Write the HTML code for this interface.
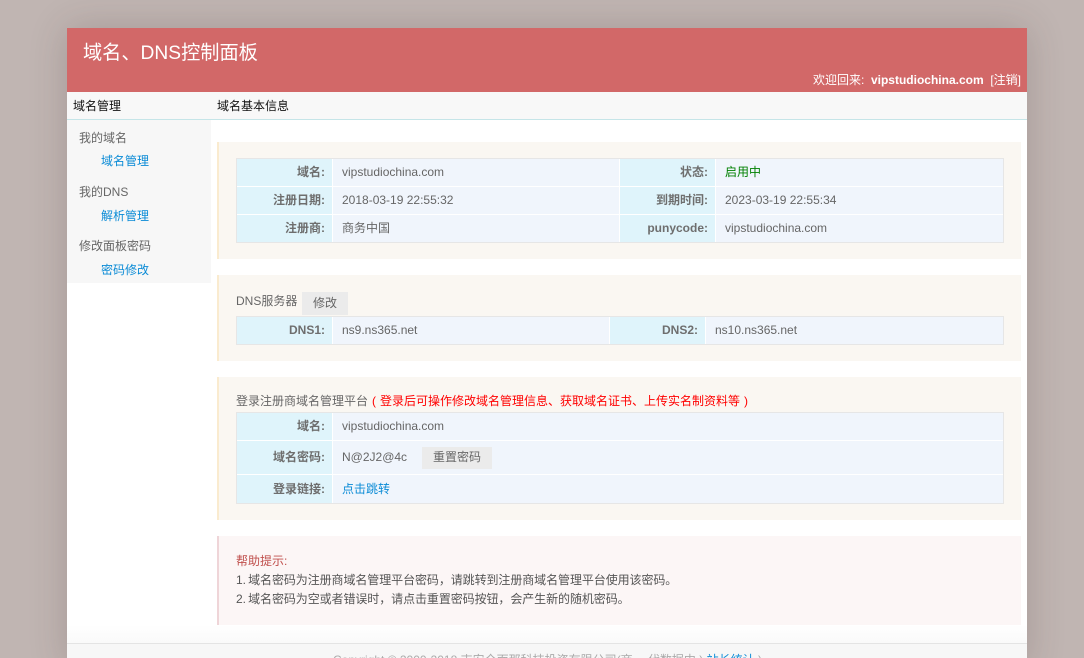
<!DOCTYPE html>
<html lang="zh-CN"><head><meta charset="utf-8"><title>域名、DNS控制面板</title>
<style>
html,body{margin:0;padding:0;width:1084px;height:658px;overflow:hidden}
body{background:#c0b5b2;font:12px/20px "Liberation Sans","Noto Sans CJK SC",sans-serif;color:#666;position:relative}
#w{position:absolute;left:67px;top:28px;width:960px;height:640px;background:#fff;box-shadow:0 0 36px rgba(60,40,40,.2)}
.a{position:absolute;white-space:nowrap}
.r{position:absolute}
.l{position:absolute;background:#dff4fb;text-align:right;font-weight:bold;color:#6e6e6e;box-sizing:border-box;padding-right:7px;line-height:27px}
.v{position:absolute;background:#f0f5fc;color:#666;box-sizing:border-box;padding-left:9px;line-height:27px;white-space:nowrap}
.t{position:absolute;background:#fff;border:1px solid #e6e6e6;box-sizing:border-box}
.p{position:absolute;left:217px;width:804px;box-sizing:border-box;border-left:2px solid #faebcf;background:#faf7f2}
.b{position:absolute;background:#ebebeb;color:#666;text-align:center}
a{color:#0a8bd6;text-decoration:none}
</style></head><body>
<div id="w"></div>

<div class="r" style="left:67px;top:28px;width:960px;height:64px;background:#d26868"></div>
<div class="a" style="left:83px;top:40px;font-size:19.2px;line-height:28px;color:#fff">域名、DNS控制面板</div>
<div class="a" style="right:63px;top:70px;color:#fff">欢迎回来:&nbsp; <b>vipstudiochina.com</b>&nbsp; [注销]</div>

<div class="r" style="left:67px;top:92px;width:960px;height:27px;background:#f8f8f8"></div>
<div class="r" style="left:67px;top:119px;width:960px;height:1px;background:#c5e5e8"></div>
<div class="a" style="left:73px;top:96px;color:#111">域名管理</div>
<div class="a" style="left:217px;top:96px;color:#111">域名基本信息</div>

<div class="r" style="left:67px;top:120px;width:144px;height:163px;background:#f7f7f7"></div>
<div class="a" style="left:79px;top:128px">我的域名</div>
<div class="a" style="left:101px;top:151px"><a href="#">域名管理</a></div>
<div class="a" style="left:79px;top:182px">我的DNS</div>
<div class="a" style="left:101px;top:206px"><a href="#">解析管理</a></div>
<div class="a" style="left:79px;top:236px">修改面板密码</div>
<div class="a" style="left:101px;top:260px"><a href="#">密码修改</a></div>

<div class="p" style="top:142px;height:117px"></div>
<div class="t" style="left:236px;top:158px;width:768px;height:85px"></div>
<div class="l" style="left:237px;top:159px;width:95px;height:27px">域名:</div>
<div class="v" style="left:333px;top:159px;width:286px;height:27px">vipstudiochina.com</div>
<div class="l" style="left:620px;top:159px;width:95px;height:27px">状态:</div>
<div class="v" style="left:716px;top:159px;width:287px;height:27px"><span style="color:#008000">启用中</span></div>
<div class="l" style="left:237px;top:187px;width:95px;height:27px">注册日期:</div>
<div class="v" style="left:333px;top:187px;width:286px;height:27px">2018-03-19 22:55:32</div>
<div class="l" style="left:620px;top:187px;width:95px;height:27px">到期时间:</div>
<div class="v" style="left:716px;top:187px;width:287px;height:27px">2023-03-19 22:55:34</div>
<div class="l" style="left:237px;top:215px;width:95px;height:27px">注册商:</div>
<div class="v" style="left:333px;top:215px;width:286px;height:27px">商务中国</div>
<div class="l" style="left:620px;top:215px;width:95px;height:27px">punycode:</div>
<div class="v" style="left:716px;top:215px;width:287px;height:27px">vipstudiochina.com</div>

<div class="p" style="top:275px;height:86px"></div>
<div class="a" style="left:236px;top:291px">DNS服务器</div>
<div class="b" style="left:302px;top:292px;width:46px;height:23px;line-height:22px">修改</div>
<div class="t" style="left:236px;top:316px;width:768px;height:29px"></div>
<div class="l" style="left:237px;top:317px;width:95px;height:27px">DNS1:</div>
<div class="v" style="left:333px;top:317px;width:276px;height:27px">ns9.ns365.net</div>
<div class="l" style="left:610px;top:317px;width:95px;height:27px">DNS2:</div>
<div class="v" style="left:706px;top:317px;width:297px;height:27px">ns10.ns365.net</div>

<div class="p" style="top:377px;height:143px"></div>
<div class="a" style="left:236px;top:391px">登录注册商域名管理平台<span style="color:#f00;margin-left:4px">(</span><span style="color:#f00;margin-left:4px">登录后可操作修改域名管理信息、获取域名证书、上传实名制资料等</span><span style="color:#f00;margin-left:4px">)</span></div>
<div class="t" style="left:236px;top:412px;width:768px;height:92px"></div>
<div class="l" style="left:237px;top:413px;width:95px;height:27px">域名:</div>
<div class="v" style="left:333px;top:413px;width:670px;height:27px">vipstudiochina.com</div>
<div class="l" style="left:237px;top:441px;width:95px;height:33px;line-height:33px">域名密码:</div>
<div class="v" style="left:333px;top:441px;width:670px;height:33px;line-height:33px">N@2J2@4c</div>
<div class="b" style="left:422px;top:447px;width:70px;height:22px;line-height:21px">重置密码</div>
<div class="l" style="left:237px;top:475px;width:95px;height:28px;line-height:29px">登录链接:</div>
<div class="v" style="left:333px;top:475px;width:670px;height:28px;line-height:29px"><a href="#">点击跳转</a></div>

<div class="p" style="top:536px;height:89px;border-left-color:#efd5d8;background:#fcf6f6"></div>
<div class="a" style="left:236px;top:551px;color:#c0504d">帮助提示:</div>
<div class="a" style="left:236px;top:570px;color:#555;word-spacing:-1px;letter-spacing:-.08px">1. 域名密码为注册商域名管理平台密码，请跳转到注册商域名管理平台使用该密码。</div>
<div class="a" style="left:236px;top:589px;color:#555;word-spacing:-1px;letter-spacing:-.08px">2. 域名密码为空或者错误时，请点击重置密码按钮，会产生新的随机密码。</div>

<div class="r" style="left:67px;top:625px;width:960px;height:18px;background:linear-gradient(#fff,#fafafa)"></div>
<div class="r" style="left:67px;top:643px;width:960px;height:1px;background:#e4e4e4"></div>
<div class="r" style="left:67px;top:644px;width:960px;height:14px;background:#f7f7f7"></div>
<div class="a" style="left:333px;top:650px;color:#aaa">Copyright © 2000-2018 吉安全面那科技投资有限公司(商 ，代数据中 ) <a href="#">站长统计</a> )</div>
</body></html>
